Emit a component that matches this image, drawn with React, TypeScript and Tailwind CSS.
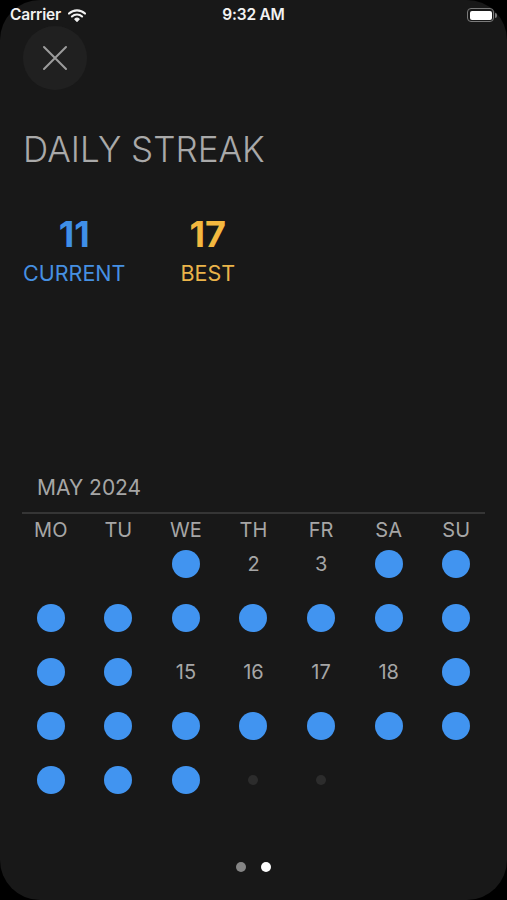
import React from 'react';

const WEEKDAYS = ['MO', 'TU', 'WE', 'TH', 'FR', 'SA', 'SU'];
const MISSED = [2, 3, 15, 16, 17, 18];
const TODAY = 29;

// May 2024 starts on a Wednesday
const CELLS: (number | null)[] = [null, null, ...Array.from({ length: 31 }, (_, i) => i + 1)];

function WifiIcon() {
  return (
    <svg width="18" height="13" viewBox="0 0 18 13" fill="none">
      <path d="M1 4.6a11.5 11.5 0 0 1 16 0" stroke="#f2f2f2" strokeWidth="2.1" strokeLinecap="round" />
      <path d="M3.9 7.5a7.4 7.4 0 0 1 10.2 0" stroke="#f2f2f2" strokeWidth="2.1" strokeLinecap="round" />
      <path d="M6.8 10.2a3.3 3.3 0 0 1 4.4 0L9 12.4z" fill="#f2f2f2" stroke="#f2f2f2" strokeWidth="1.2" strokeLinejoin="round" />
    </svg>
  );
}

function Battery() {
  return (
    <div className="flex items-center">
      <div className="w-[27px] h-[14px] rounded-[4px] border-[1.5px] border-[#7a7a7a] p-[1.5px]">
        <div className="w-full h-full rounded-[2px] bg-white" />
      </div>
      <div className="w-[2px] h-[5px] rounded-r-sm bg-[#7a7a7a] ml-[1px]" />
    </div>
  );
}

function DayCell({ day }: { day: number | null }) {
  if (day === null) return <div className="h-[28px]" />;
  if (day > TODAY) {
    return (
      <div className="h-[28px] flex items-center justify-center">
        <div className="w-[10px] h-[10px] rounded-full bg-[#2c2c2c]" />
      </div>
    );
  }
  if (MISSED.includes(day)) {
    return (
      <div className="h-[28px] flex items-center justify-center text-[20px] leading-[28px] text-[#a6a6a6]">
        {day}
      </div>
    );
  }
  return (
    <div className="h-[28px] flex items-center justify-center">
      <div className="w-[28px] h-[28px] rounded-full bg-[#4194f0]" />
    </div>
  );
}

export default function App() {
  return (
    <div className="h-[900px] w-full bg-black font-['Inter',sans-serif]">
      <div className="h-full rounded-[40px] bg-[#181818] flex flex-col">
        {/* status bar */}
        <div className="h-[26px] pt-[4px] px-[10px] flex items-center justify-between text-[#f2f2f2] relative">
          <div className="flex items-center gap-[7px]">
            <span className="text-[15.5px] font-semibold tracking-[-0.2px]">Carrier</span>
            <WifiIcon />
          </div>
          <span className="absolute left-1/2 -translate-x-1/2 text-[15.5px] font-semibold tracking-[-0.2px]">9:32 AM</span>
          <Battery />
        </div>

        {/* close */}
        <button className="ml-[23px] w-16 h-16 rounded-full bg-[#202020] flex items-center justify-center">
          <svg width="26" height="26" viewBox="0 0 26 26">
            <path d="M2 2L24 24M24 2L2 24" stroke="#9c9c9c" strokeWidth="2" strokeLinecap="round" />
          </svg>
        </button>

        <h1 className="mt-[37px] ml-[23px] text-[35px] leading-[44px] font-light text-[#a9a9a9]">DAILY STREAK</h1>

        <div className="mt-[43px] ml-[23px] flex gap-[55px]">
          <div className="flex flex-col items-center">
            <span className="text-[36px] leading-[40px] font-bold text-[#3f8fe8]">11</span>
            <span className="mt-[5px] text-[21.5px] leading-[28px] text-[#4690e2]">CURRENT</span>
          </div>
          <div className="flex flex-col items-center">
            <span className="text-[36px] leading-[40px] font-bold text-[#f4b83f]">17</span>
            <span className="mt-[5px] text-[21.5px] leading-[28px] text-[#eab44a]">BEST</span>
          </div>
        </div>

        {/* calendar */}
        <div className="mt-[187px]">
          <div className="ml-[37px] text-[21px] leading-[28px] text-[#a6a6a6]">MAY 2024</div>
          <div className="mt-[10px] mx-[22px] h-[2px] bg-[#353535]" />
          <div className="mt-[6px] px-[17px] grid grid-cols-7">
            {WEEKDAYS.map(d => (
              <div key={d} className="text-center text-[20px] leading-[20px] text-[#a6a6a6]">{d}</div>
            ))}
          </div>
          <div className="mt-[10px] px-[17px] grid grid-cols-7 gap-y-[26px]">
            {CELLS.map((day, i) => (
              <DayCell key={i} day={day} />
            ))}
          </div>
        </div>

        {/* pager */}
        <div className="mt-auto mb-[28px] flex justify-center gap-[15px]">
          <div className="w-[10px] h-[10px] rounded-full bg-[#858585]" />
          <div className="w-[10px] h-[10px] rounded-full bg-white" />
        </div>
      </div>
    </div>
  );
}
